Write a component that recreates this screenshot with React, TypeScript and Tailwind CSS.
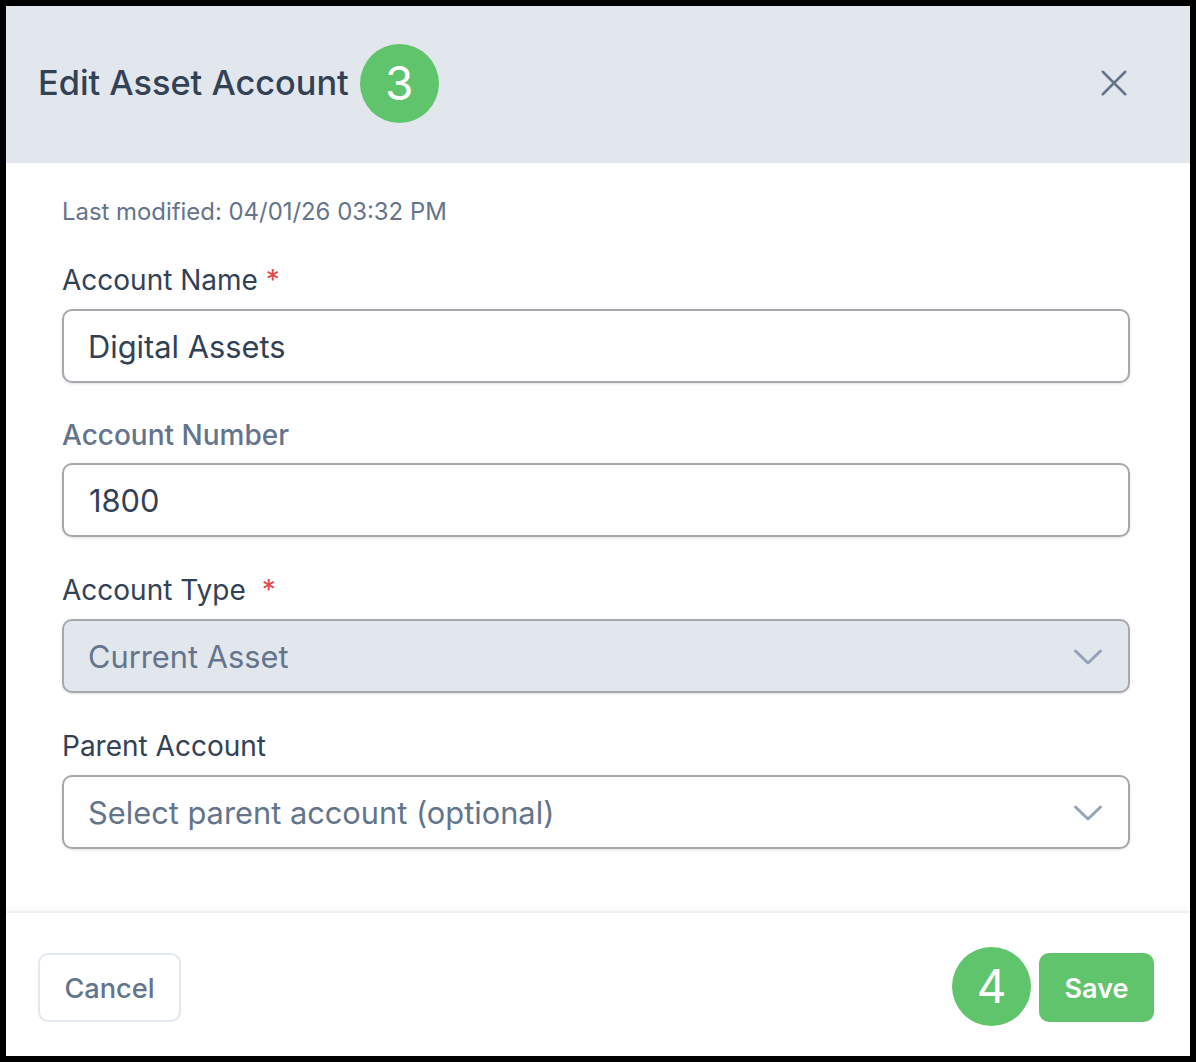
const font = "font-['Inter',sans-serif]";

function Chevron() {
  return (
    <svg width="30" height="18" viewBox="0 0 30 18" fill="none" className="text-[#94a3b8]">
      <path d="M2.5 3L15 15L27.5 3" stroke="currentColor" strokeWidth="3" strokeLinecap="round" strokeLinejoin="round" />
    </svg>
  );
}

function Badge({ n, className }: { n: string; className?: string }) {
  return (
    <div className={`w-[79px] h-[79px] rounded-full bg-[#5fc46b] text-white flex items-center justify-center text-[46px] font-normal leading-none shrink-0 ${className ?? ""}`}>
      {n}
    </div>
  );
}

const box = "h-[74px] pt-[2px] rounded-[10px] border-2 border-[#a5a8ad] shadow-sm flex items-center text-[30.8px]";
const label = "block text-[28px] leading-[34px] font-normal text-[#334155]";

export default function App() {
  return (
    <div className={`w-[1196px] h-[1062px] bg-black p-[6px] ${font}`}>
      <div className="w-[1184px] h-[1050px] bg-white flex flex-col overflow-hidden">
        <header className="h-[157px] shrink-0 bg-[#e2e7ee] flex items-center justify-between pl-[32px] pr-[58px] pb-[3px]">
          <div className="flex items-center gap-[11px]">
            <h1 className="text-[34.3px] font-medium text-[#334155] leading-none">Edit Asset Account</h1>
            <Badge n="3" />
          </div>
          <svg width="36" height="36" viewBox="0 0 24 24" fill="none" className="text-[#64748b]">
            <path d="M4.5 4.5l15 15M19.5 4.5l-15 15" stroke="currentColor" strokeWidth="1.7" strokeLinecap="round" />
          </svg>
        </header>
        <main className="flex-1 pl-[56px] pr-[60px] pt-[35px]">
          <p className="text-[23.9px] leading-[28px] text-[#64748b]">Last modified: 04/01/26 03:32 PM</p>
          <label className={`${label} mt-[37px]`}>
            Account Name <span className="text-[#e24a4a]">*</span>
          </label>
          <div className={`${box} mt-[12px] pl-[24px] text-[#334155]`}>Digital Assets</div>
          <label className="block mt-[35px] text-[28px] leading-[34px] font-medium text-[#64748b]">Account Number</label>
          <div className={`${box} mt-[11px] pl-[25px] text-[#334155]`}>1800</div>
          <label className={`${label} mt-[36px]`}>
            Account Type <span className="text-[#e24a4a] ml-[8px]">*</span>
          </label>
          <div className={`${box} mt-[12px] bg-[#e2e7ee] justify-between pl-[24px] pr-[25px] text-[#64748b]`}>
            Current Asset
            <Chevron />
          </div>
          <label className={`${label} mt-[36px]`}>Parent Account</label>
          <div className={`${box} mt-[12px] justify-between pl-[24px] pr-[25px] text-[#64748b]`}>
            Select parent account (optional)
            <Chevron />
          </div>
        </main>
        <footer className="h-[145px] shrink-0 border-t-2 border-[#edf2f7] shadow-[0_-4px_6px_-1px_rgba(0,0,0,0.03)] flex items-center justify-between pl-[32px] pr-[36px] pt-[5px]">
          <button className="w-[143px] h-[69px] pt-[4px] rounded-[10px] border-2 border-[#e2e8f0] text-[27.2px] font-medium text-[#64748b]">Cancel</button>
          <div className="flex items-center gap-[8px]">
            <Badge n="4" className="mb-[2px]" />
            <button className="w-[115px] h-[69px] pt-[4px] rounded-[10px] bg-[#5fc46b] text-white text-[27px] font-semibold">Save</button>
          </div>
        </footer>
      </div>
    </div>
  );
}
